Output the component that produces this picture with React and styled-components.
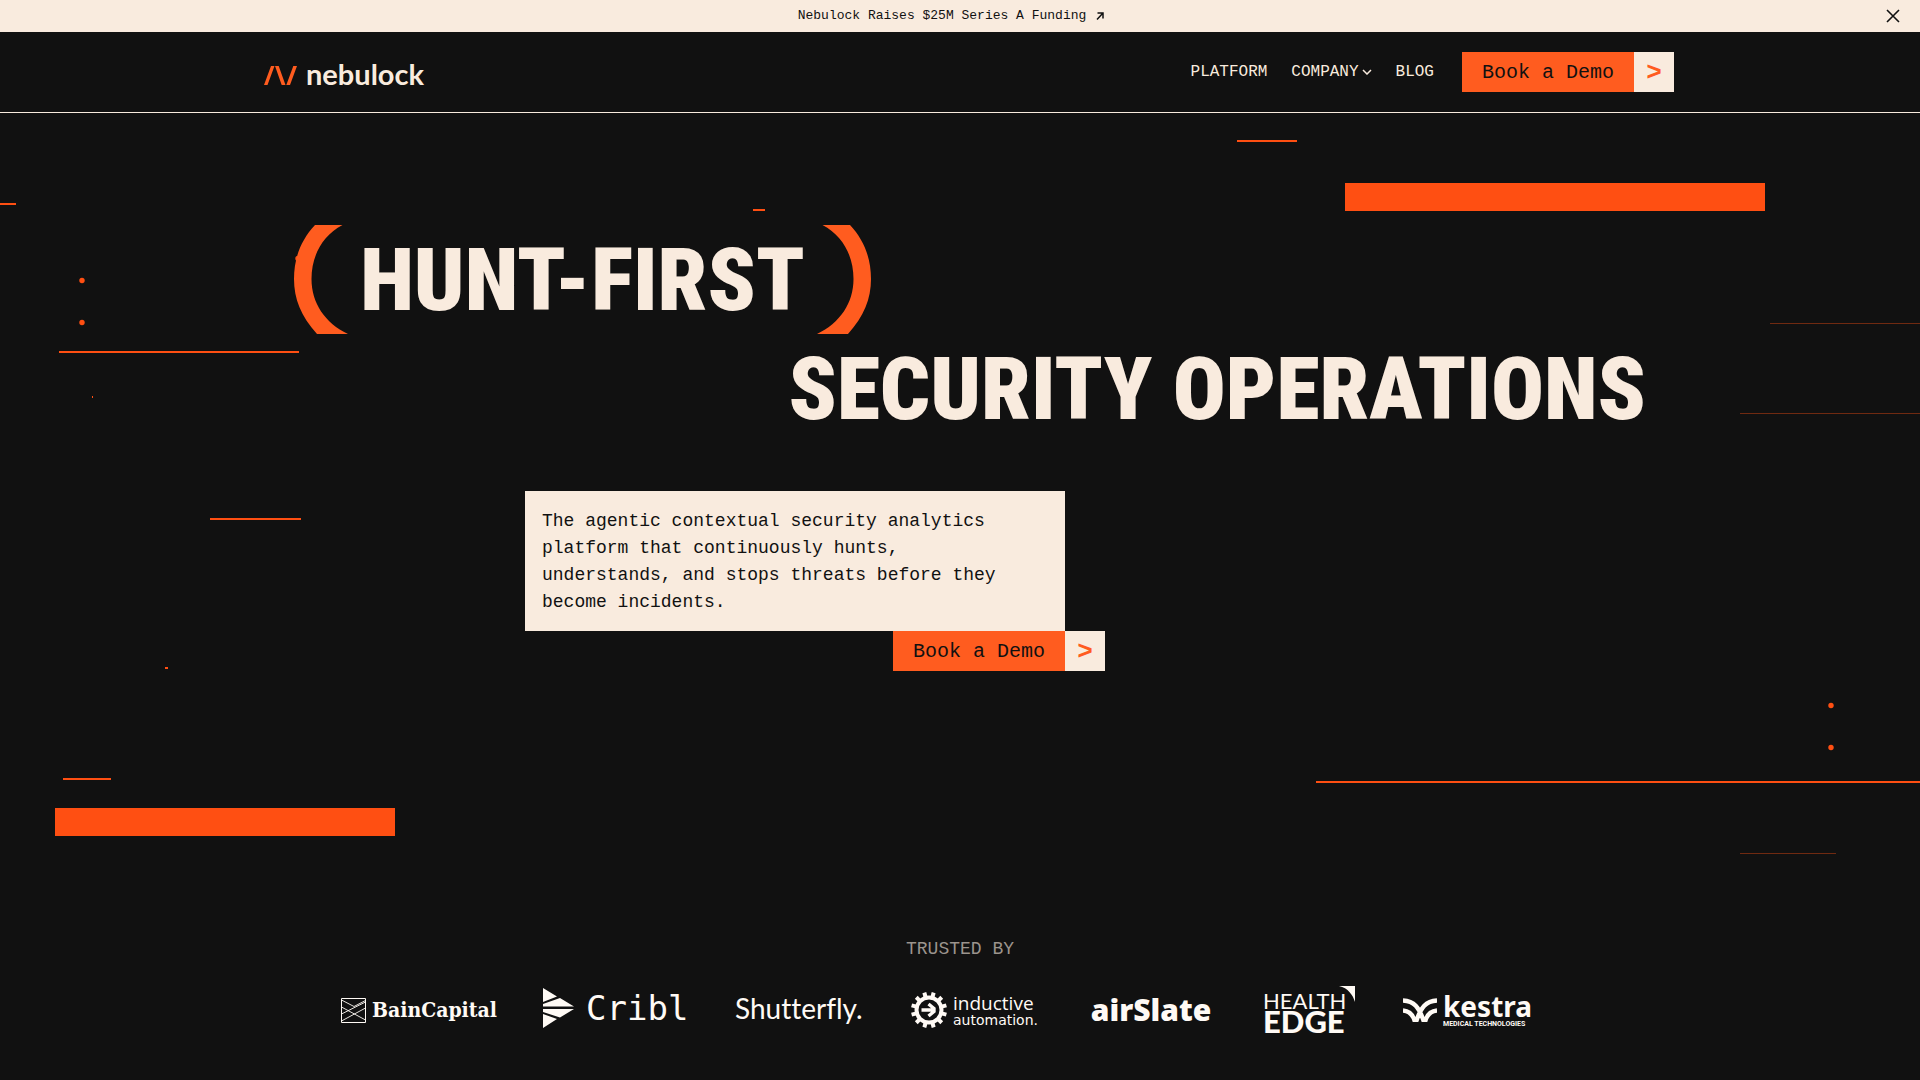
import React from "react";
import styled, { createGlobalStyle } from "styled-components";

const cream = "#f9ebde";
const ink = "#111111";
const orange = "#ff5c1f";
const flame = "#ff4f12";
const mono = '"Liberation Mono", monospace';

const GlobalStyle = createGlobalStyle`
  *, *::before, *::after { box-sizing: border-box; }
  body { margin: 0; background: ${ink}; color: ${cream}; font-family: ${mono}; }
  a { color: inherit; text-decoration: none; }
  h1, p, ul { margin: 0; padding: 0; }
  button { font: inherit; color: inherit; background: none; border: 0; padding: 0; cursor: pointer; }
  svg { flex: none; }
`;

const Page = styled.div`
  display: flex;
  flex-direction: column;
  min-height: 100vh;
  overflow: hidden;
`;

const Banner = styled.div`
  display: flex;
  align-items: center;
  gap: 4px;
  height: 32px;
  padding: 0 20px;
  background: ${cream};
  color: ${ink};
`;

const BannerLink = styled.a`
  flex: 1;
  display: flex;
  align-items: center;
  justify-content: center;
  gap: 10px;
  font-size: 13px;
  line-height: 16px;
`;

const CloseButton = styled.button`
  display: flex;
`;

const Header = styled.header`
  border-bottom: 1px solid ${cream};
`;

const Container = styled.div`
  width: 100%;
  max-width: 1428px;
  margin: 0 auto;
`;

const HeaderRow = styled(Container)`
  display: flex;
  align-items: center;
  justify-content: space-between;
  height: 80px;
`;

const Brand = styled.a`
  display: flex;
  align-items: baseline;
  gap: 8px;
  padding: 4px 0 0 18px;
  font: 700 29px/32px Lato, sans-serif;
`;

const Nav = styled.nav`
  display: flex;
  align-items: center;
  gap: 24px;
  font-size: 16px;
  line-height: 24px;
`;

const NavLink = styled.a``;

const NavButton = styled.button`
  display: flex;
  align-items: center;
  gap: 3px;
`;

const DemoLink = styled.a`
  display: inline-flex;
  height: 40px;
  font-size: 20px;
  line-height: 42px;
`;

const NavDemo = styled(DemoLink)`
  margin-left: 4px;
`;

const DemoLabel = styled.span`
  padding: 0 20px;
  background: ${orange};
  color: ${ink};
`;

const DemoArrow = styled.span`
  width: 40px;
  background: ${cream};
  color: ${orange};
  font-size: 26px;
  font-weight: 700;
  text-align: center;
`;

const Hero = styled.section`
  position: relative;
  padding: 112px 0 265px;
`;

const Backdrop = styled.svg`
  position: absolute;
  inset: 0;
  width: 100%;
  height: 100%;
`;

const HeroContent = styled(Container)`
  position: relative;
`;

const Title = styled.h1`
  display: flex;
  flex-direction: column;
  font: 900 88px/109px "Roboto Condensed", Roboto, sans-serif;
`;

const TitleFirst = styled.span`
  display: flex;
  justify-content: space-between;
  width: 577px;
  margin-left: 48px;
`;

const TitleSecond = styled.span`
  align-self: flex-end;
  padding-right: 28px;
`;

const Pitch = styled.div`
  display: flex;
  flex-direction: column;
  align-items: flex-end;
  width: 580px;
  margin: 48px 0 0 279px;
`;

const PitchText = styled.p`
  width: 540px;
  margin-right: 40px;
  padding: 17px 48px 15px 17px;
  background: ${cream};
  color: ${ink};
  font-size: 18px;
  line-height: 27px;
`;

const Trusted = styled.section`
  display: flex;
  flex-direction: column;
  align-items: center;
  gap: 23px;
  padding-bottom: 46px;
`;

const TrustedLabel = styled.p`
  color: #9b948d;
  font-size: 18px;
  line-height: 27px;
`;

const Logos = styled.ul`
  display: flex;
  height: 48px;
  list-style: none;
  color: #fffaf5;
`;

const Logo = styled.li`
  display: flex;
  align-items: center;
  justify-content: ${(p) => (p.$center ? "center" : "flex-start")};
  gap: ${(p) => p.$gap || 0}px;
  width: ${(p) => p.$width}px;
  height: ${(p) => p.$height || 48}px;
  margin-right: 48px;
  white-space: nowrap;
`;

const Stack = styled.span`
  display: flex;
  flex-direction: column;
`;

const EdgeStack = styled(Stack)`
  position: relative;
  align-self: flex-start;
  width: 92px;
  padding-top: 4px;
`;

const EdgeMark = styled.svg`
  position: absolute;
  top: 0;
  right: 0;
`;

const Word = styled.span`
  font: ${(p) => p.$font};
  font-variant-ligatures: none;
`;

/* Decorative strokes: [x, y, width, height, faint] on a 1920 wide canvas */
const strokes = [
  [1237, 27, 60, 2],
  [1345, 70, 420, 28],
  [0, 90, 16, 2],
  [753, 96, 12, 2],
  [59, 238, 240, 2],
  [92, 283, 1, 2],
  [210, 405, 91, 2],
  [165, 554, 3, 2],
  [63, 665, 48, 2],
  [55, 695, 340, 28],
  [1770, 210, 150, 1, true],
  [1740, 300, 180, 1, true],
  [1316, 668, 604, 2],
  [1740, 740, 96, 1, true],
];

const dots = [
  [82, 167],
  [82, 209],
  [298, 145],
  [1831, 592],
  [1831, 634],
];

const pct = (x) => `${(x / 1920) * 100}%`;

function Decoration() {
  return (
    <Backdrop aria-hidden="true">
      {strokes.map(([x, y, w, h, faint]) => (
        <rect key={`${x}-${y}`} x={pct(x)} y={y} width={pct(w)} height={h} fill={flame} opacity={faint ? 0.4 : 1} />
      ))}
      {dots.map(([x, y]) => (
        <circle key={`${x}-${y}`} cx={pct(x)} cy={y + 0.5} r="2.7" fill={flame} />
      ))}
    </Backdrop>
  );
}

function Demo({ as: Tag = DemoLink }) {
  return (
    <Tag href="#demo">
      <DemoLabel>Book a Demo</DemoLabel>
      <DemoArrow aria-hidden="true">&gt;</DemoArrow>
    </Tag>
  );
}

const teeth = Array.from({ length: 12 }, (_, i) => i * 30);

export default function App() {
  return (
    <>
      <GlobalStyle />
      <Page>
        <Banner>
          <BannerLink href="#funding">
            Nebulock Raises $25M Series A Funding
            <svg width="8" height="8" viewBox="0 0 8 8" fill="none" stroke={ink} strokeWidth="1.5" aria-hidden="true">
              <path d="M1.500 1H7V6.500M7 1L1 7.500" />
            </svg>
          </BannerLink>
          <CloseButton aria-label="Close banner">
            <svg width="14" height="14" viewBox="0 0 14 14" stroke={ink} strokeWidth="1.6" aria-hidden="true">
              <path d="M1 1L13 13M13 1L1 13" />
            </svg>
          </CloseButton>
        </Banner>

        <Header>
          <HeaderRow>
            <Brand href="#home">
              <svg width="34" height="19" viewBox="0 0 34 19" fill={orange} aria-hidden="true">
                <path d="M0 19L7 0H10.500L3.500 19ZM11 0H14.700L21.500 19H17.700ZM22.300 19L29.300 0H33L26 19Z" />
              </svg>
              nebulock
            </Brand>
            <Nav>
              <NavLink href="#platform">PLATFORM</NavLink>
              <NavButton>
                COMPANY
                <svg width="10" height="6" viewBox="0 0 10 6" fill="none" stroke={cream} strokeWidth="1.5" aria-hidden="true">
                  <path d="M1 1L5 5L9 1" />
                </svg>
              </NavButton>
              <NavLink href="#blog">BLOG</NavLink>
              <Demo as={NavDemo} />
            </Nav>
          </HeaderRow>
        </Header>

        <Hero>
          <Decoration />
          <HeroContent>
            <Title>
              <TitleFirst>
                <svg width="54" height="109" viewBox="0 0 54 109" fill={orange} aria-hidden="true">
                  <path d="M21 0H48.500C28 11 17.500 31 17.500 54C17.500 78 31 98 54 109H23C7 91 0 74 0 54C0 33 7 15 21 0Z" />
                </svg>
                HUNT-FIRST
                <svg width="54" height="109" viewBox="0 0 54 109" fill={orange} aria-hidden="true">
                  <path d="M33 0H5.500C26 11 36.500 31 36.500 54C36.500 78 23 98 0 109H31C47 91 54 74 54 54C54 33 47 15 33 0Z" />
                </svg>
              </TitleFirst>
              <TitleSecond>SECURITY OPERATIONS</TitleSecond>
            </Title>
            <Pitch>
              <PitchText>
                The agentic contextual security analytics platform that continuously hunts, understands, and stops
                threats before they become incidents.
              </PitchText>
              <Demo />
            </Pitch>
          </HeroContent>
        </Hero>

        <Trusted>
          <TrustedLabel>TRUSTED BY</TrustedLabel>
          <Logos>
            <Logo $width={154} $gap={6}>
              <svg width="25" height="25" viewBox="0 0 25 25" fill="none" stroke="currentColor" aria-hidden="true">
                <path d="M.5.5H24.500V24.500H.5Z" />
                <path d="M.5 2L13 8.500L24.500 2.500M.5 9L24.500 22M.5 16L24.500 4M.5 23L24.500 10" strokeWidth="0.9" />
              </svg>
              <Word $font='700 21px/24px "DejaVu Serif Condensed", "DejaVu Serif", serif'>BainCapital</Word>
            </Logo>
            <Logo $width={144} $gap={10} $height={44}>
              <svg width="33" height="40" viewBox="0 0 33 40" fill="currentColor" aria-hidden="true">
                <path d="M0 0L14 8.500L0 14ZM0 16L17 10L31 18.500H0ZM0 21H31L17 29.500L0 24ZM0 26L14 31L0 40Z" />
              </svg>
              <Word $font='400 34px/40px "DejaVu Sans Mono", monospace'>Cribl</Word>
            </Logo>
            <Logo $width={128} $height={44}>
              <Word $font="400 28px/32px Lato, sans-serif">Shutterfly.</Word>
            </Logo>
            <Logo $width={128} $gap={6}>
              <svg width="36" height="36" viewBox="0 0 36 36" fill="none" stroke="currentColor" aria-hidden="true">
                <circle cx="18" cy="18" r="12.5" strokeWidth="4" />
                {teeth.map((a) => (
                  <path key={a} d="M18 0V5" strokeWidth="4" transform={`rotate(${a + 15} 18 18)`} />
                ))}
                <path d="M10.500 18H22M17.500 12L23 16.500V19.500L17.500 24" strokeWidth="3.4" />
              </svg>
              <Stack>
                <Word $font='400 19px/20px "Open Sans", sans-serif'>inductive</Word>
                <Word $font='400 14px/14px "DejaVu Sans", sans-serif'>automation.</Word>
              </Stack>
            </Logo>
            <Logo $width={128} $center>
              <Word $font='800 30px/36px "Open Sans", sans-serif'>airSlate</Word>
            </Logo>
            <Logo $width={92}>
              <EdgeStack>
                <Word $font="400 22px/22px Lato, sans-serif">HEALTH</Word>
                <Word $font="900 31px/19px Lato, sans-serif">EDGE</Word>
                <EdgeMark width="16" height="16" viewBox="0 0 16 16" fill="currentColor" aria-hidden="true">
                  <path d="M0 0H16V16C14 9 9 2 0 0Z" />
                </EdgeMark>
              </EdgeStack>
            </Logo>
            <Logo $width={128} $gap={6}>
              <svg width="34" height="24" viewBox="0 0 34 24" fill="none" stroke="currentColor" strokeWidth="4.4" aria-hidden="true">
                <path d="M0 2.500C11 3 16 9 21 24M34 2.500C23 3 18 9 13 24M0 12.500C6 13 10 16 12 24M34 12.500C28 13 24 16 22 24" />
              </svg>
              <Stack>
                <Word $font='700 28px/28px "Noto Sans", sans-serif'>kestra</Word>
                <Word $font="700 7px/8px Roboto, sans-serif">MEDICAL TECHNOLOGIES</Word>
              </Stack>
            </Logo>
          </Logos>
        </Trusted>
      </Page>
    </>
  );
}
